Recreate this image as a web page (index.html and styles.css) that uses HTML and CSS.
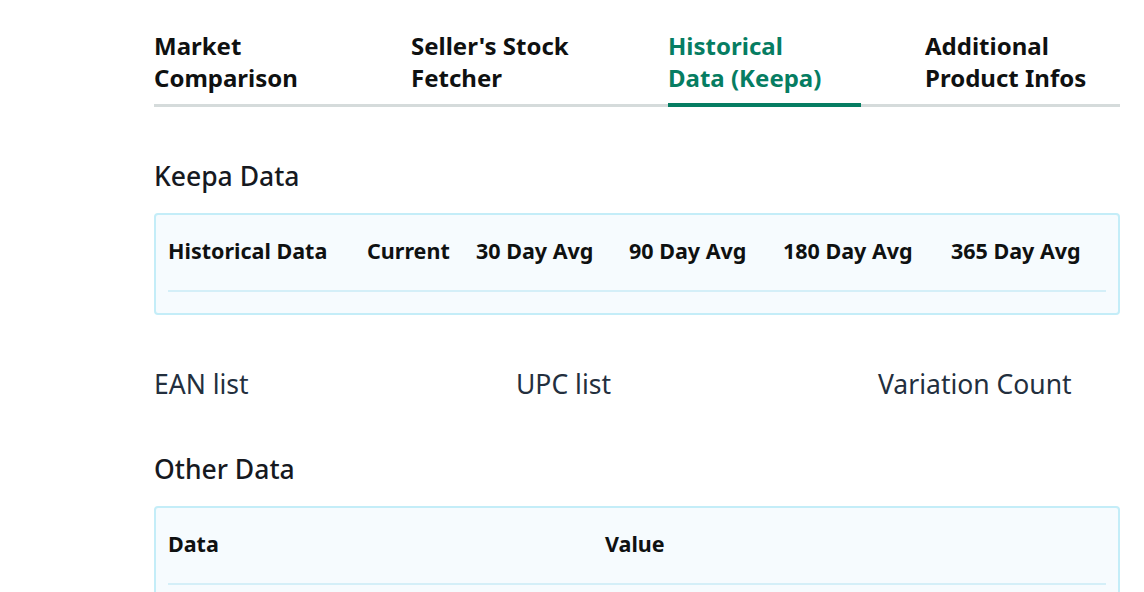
FILE: index.html
```html
<!DOCTYPE html>
<html lang="en">
<head>
<meta charset="utf-8">
<title>Historical Data (Keepa)</title>
<link rel="stylesheet" href="styles.css">
</head>
<body>
<div class="page">
  <nav class="tabs">
    <div class="tab"><span class="tab-label">Market Comparison</span></div>
    <div class="tab"><span class="tab-label">Seller's Stock Fetcher</span></div>
    <div class="tab active"><span class="tab-label">Historical Data (Keepa)</span></div>
    <div class="tab"><span class="tab-label">Additional Product Infos</span></div>
  </nav>

  <h2 class="section-title">Keepa Data</h2>
  <div class="table-box">
    <table class="data-table keepa">
      <thead>
        <tr>
          <th>Historical Data</th>
          <th>Current</th>
          <th>30 Day Avg</th>
          <th>90 Day Avg</th>
          <th>180 Day Avg</th>
          <th>365 Day Avg</th>
        </tr>
      </thead>
    </table>
  </div>

  <div class="lists">
    <div class="list-label">EAN list</div>
    <div class="list-label">UPC list</div>
    <div class="list-label">Variation Count</div>
  </div>

  <h2 class="section-title">Other Data</h2>
  <div class="table-box">
    <table class="data-table other">
      <thead>
        <tr>
          <th>Data</th>
          <th>Value</th>
        </tr>
      </thead>
    </table>
  </div>
</div>
</body>
</html>
```

FILE: styles.css
```css
* { box-sizing: border-box; }
html, body { margin: 0; padding: 0; background: #ffffff; }
body {
  font-family: "Noto Sans", "Open Sans", sans-serif;
  color: #0f1111;
}
.page {
  width: 966px;
  margin-left: 154px;
  padding-top: 30px;
}
.tabs {
  display: flex;
  gap: 64px;
  border-bottom: 3px solid #d5dbdb;
}
.tab {
  width: 193px;
  font-size: 24px;
  font-weight: 700;
  line-height: 32px;
  padding-bottom: 9px;
  margin-bottom: -3px;
  border-bottom: 4px solid transparent;
  color: #0f1111;
}
.tab-label {
  display: block;
  max-width: 168px;
}
.tab.active {
  color: #067d62;
  border-bottom-color: #067d62;
}
.section-title {
  margin: 53px 0 21px;
  font-size: 26.5px;
  font-weight: 500;
  line-height: 32px;
  color: #16191f;
}
.table-box {
  border: 2px solid #c4edf8;
  border-radius: 4px;
  background: #f6fbfe;
  padding: 12px 12px 21px;
}
.data-table {
  width: 100%;
  border-collapse: collapse;
}
.data-table th {
  text-align: left;
  vertical-align: top;
  font-size: 21.5px;
  font-weight: 700;
  line-height: 28px;
  padding: 10px 0 25px;
  border-bottom: 2px solid #d4eff8;
  white-space: nowrap;
}
.keepa th:nth-child(1) { width: 199px; }
.keepa th:nth-child(2) { width: 109px; }
.keepa th:nth-child(3) { width: 153px; }
.keepa th:nth-child(4) { width: 154px; }
.keepa th:nth-child(5) { width: 168px; }
.other th:nth-child(1) { width: 437px; }
.lists {
  display: grid;
  grid-template-columns: 362px 362px auto;
  margin-top: 53px;
}
.list-label {
  font-size: 26.5px;
  line-height: 32px;
  color: #232f3e;
}
```
